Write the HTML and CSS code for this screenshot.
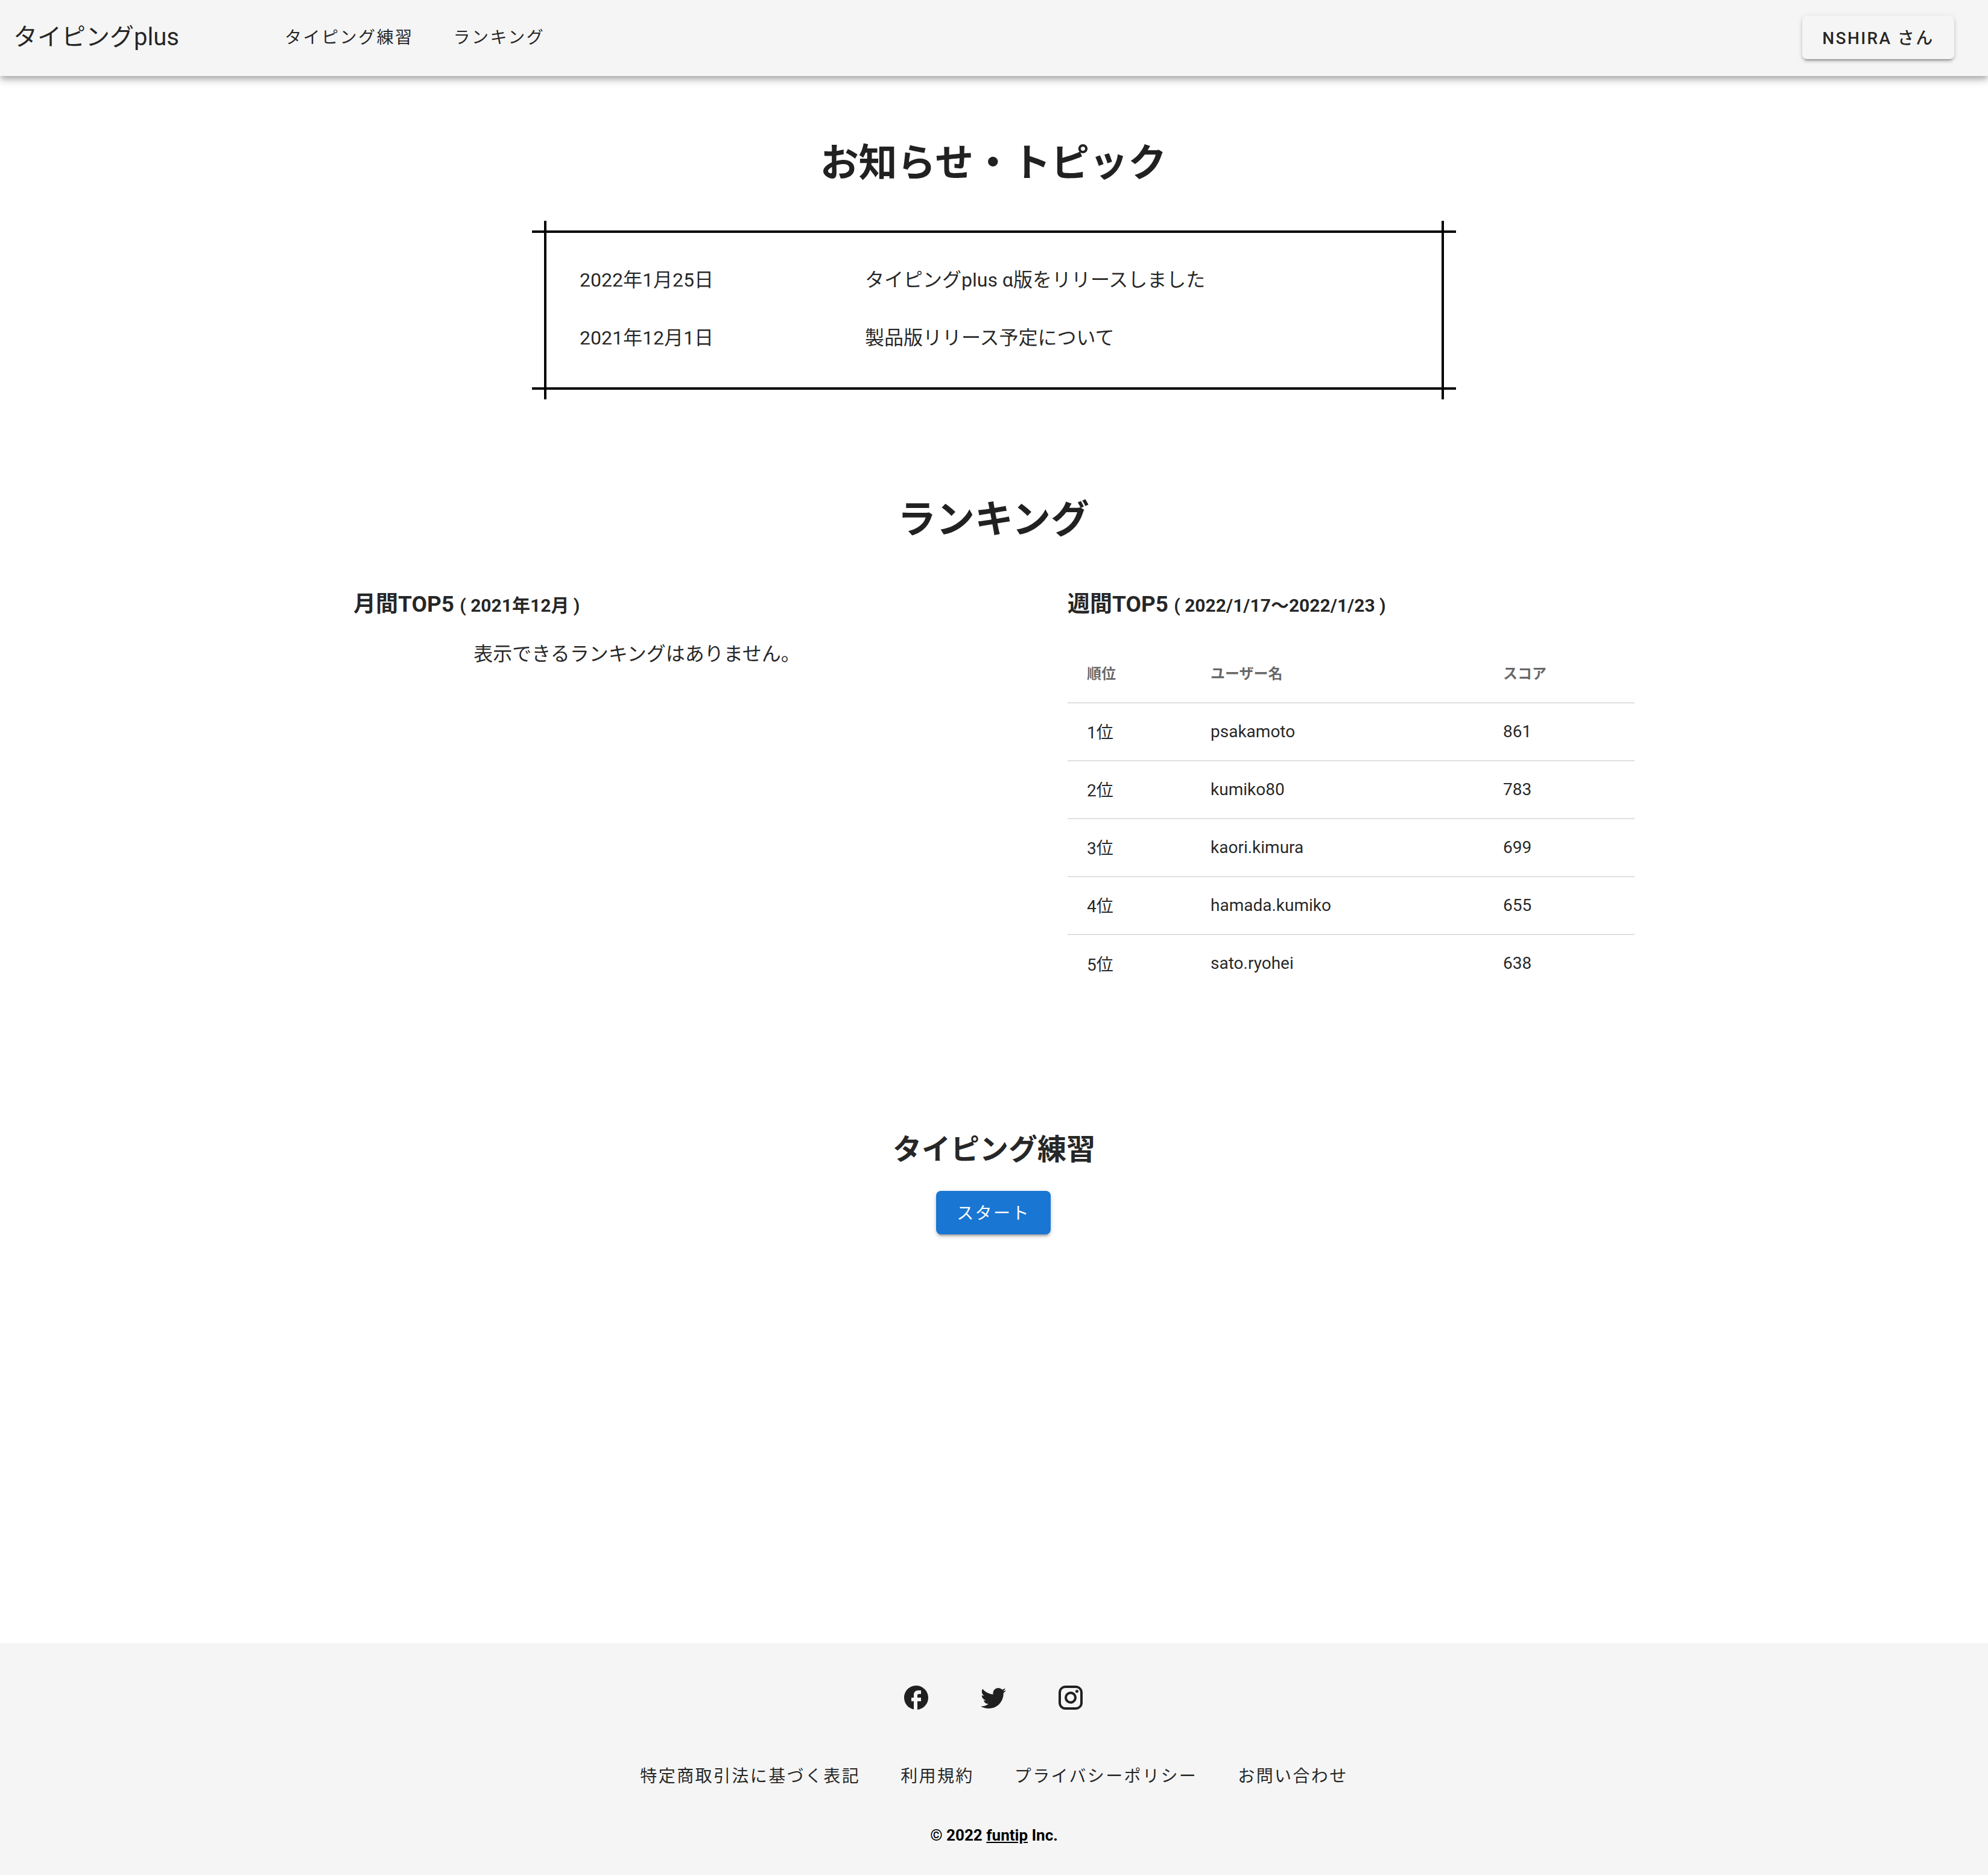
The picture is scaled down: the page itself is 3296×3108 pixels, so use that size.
FILE: index.html
```html
<!DOCTYPE html>
<html lang="ja">
<head>
    <meta charset="UTF-8">
    <meta name="viewport" content="width=device-width, initial-scale=1.0">
    <title>タイピングplus</title>
    <link rel="stylesheet" href="styles.css">
</head>
<body>

    <header class="app-bar">
        <a href="#" class="logo">タイピングplus</a>
        <nav class="main-nav">
            <a href="#">タイピング練習</a>
            <a href="#">ランキング</a>
        </nav>
        <button class="user-btn">NSHIRA さん</button>
    </header>

    <main class="content">
        <h2 class="section-title">お知らせ・トピック</h2>
        <div class="notice">
            <div class="notice-row">
                <span>2022年1月25日</span>
                <a href="#">タイピングplus α版をリリースしました</a>
            </div>
            <div class="notice-row">
                <span>2021年12月1日</span>
                <a href="#">製品版リリース予定について</a>
            </div>
        </div>

        <h2 class="section-title ranking-title">ランキング</h2>
        <div class="ranking-grid">
            <section>
                <h3 class="rank-heading">月間TOP5 <small>( 2021年12月 )</small></h3>
                <p class="empty-msg">表示できるランキングはありません。</p>
            </section>
            <section>
                <h3 class="rank-heading">週間TOP5 <small>( 2022/1/17〜2022/1/23 )</small></h3>
                <table class="rank-table">
                    <thead>
                        <tr>
                            <th class="col-rank">順位</th>
                            <th class="col-user">ユーザー名</th>
                            <th class="col-score">スコア</th>
                        </tr>
                    </thead>
                    <tbody>
                        <tr><td>1位</td><td>psakamoto</td><td>861</td></tr>
                        <tr><td>2位</td><td>kumiko80</td><td>783</td></tr>
                        <tr><td>3位</td><td>kaori.kimura</td><td>699</td></tr>
                        <tr><td>4位</td><td>hamada.kumiko</td><td>655</td></tr>
                        <tr><td>5位</td><td>sato.ryohei</td><td>638</td></tr>
                    </tbody>
                </table>
            </section>
        </div>

        <h2 class="practice-title">タイピング練習</h2>
        <div class="practice-action">
            <button class="start-btn">スタート</button>
        </div>
    </main>

    <footer class="site-footer">
        <div class="social">
            <a href="#" aria-label="Facebook">
                <svg viewBox="0 0 24 24"><path d="M22 12c0-5.52-4.48-10-10-10S2 6.48 2 12c0 4.84 3.44 8.87 8 9.8V15H8v-3h2V9.5C10 7.57 11.57 6 13.5 6H16v3h-2c-.55 0-1 .45-1 1v2h3v3h-3v6.95c5.05-.5 9-4.76 9-9.95z"/></svg>
            </a>
            <a href="#" aria-label="Twitter">
                <svg viewBox="0 0 24 24"><path d="M22.46 6c-.77.35-1.6.58-2.46.69.88-.53 1.56-1.37 1.88-2.38-.83.5-1.75.85-2.72 1.05C18.37 4.5 17.26 4 16 4c-2.35 0-4.27 1.92-4.27 4.29 0 .34.04.67.11.98C8.28 9.09 5.11 7.38 3 4.79c-.37.63-.58 1.37-.58 2.15 0 1.49.75 2.81 1.91 3.56-.71 0-1.37-.2-1.95-.5v.03c0 2.08 1.48 3.82 3.44 4.21a4.22 4.22 0 0 1-1.93.07 4.28 4.28 0 0 0 4 2.98 8.521 8.521 0 0 1-5.33 1.84c-.34 0-.68-.02-1.02-.06C3.44 20.29 5.7 21 8.12 21 16 21 20.33 14.46 20.33 8.79c0-.19 0-.37-.01-.56.84-.6 1.56-1.36 2.14-2.23z"/></svg>
            </a>
            <a href="#" aria-label="Instagram">
                <svg viewBox="0 0 24 24"><path d="M7.8 2h8.4C19.4 2 22 4.6 22 7.8v8.4a5.8 5.8 0 0 1-5.8 5.8H7.8C4.6 22 2 19.4 2 16.2V7.8A5.8 5.8 0 0 1 7.8 2m-.2 2A3.6 3.6 0 0 0 4 7.6v8.8C4 18.39 5.61 20 7.6 20h8.8a3.6 3.6 0 0 0 3.6-3.6V7.6C20 5.61 18.39 4 16.4 4H7.6m9.65 1.5a1.25 1.25 0 0 1 1.25 1.25A1.25 1.25 0 0 1 17.25 8 1.25 1.25 0 0 1 16 6.75a1.25 1.25 0 0 1 1.25-1.25M12 7a5 5 0 0 1 5 5 5 5 0 0 1-5 5 5 5 0 0 1-5-5 5 5 0 0 1 5-5m0 2a3 3 0 0 0-3 3 3 3 0 0 0 3 3 3 3 0 0 0 3-3 3 3 0 0 0-3-3z"/></svg>
            </a>
        </div>
        <nav class="footer-nav">
            <a href="#">特定商取引法に基づく表記</a>
            <a href="#">利用規約</a>
            <a href="#">プライバシーポリシー</a>
            <a href="#">お問い合わせ</a>
        </nav>
        <p class="copyright">© 2022 <a href="#">funtip</a> Inc.</p>
    </footer>

</body>
</html>
```

FILE: styles.css
```css
* {
    margin: 0;
    padding: 0;
    box-sizing: border-box;
}
body {
    font-family: Roboto, "Noto Sans CJK JP", sans-serif;
    color: rgba(0, 0, 0, 0.87);
    background-color: #fff;
    min-height: 100vh;
    display: flex;
    flex-direction: column;
}
a {
    color: inherit;
    text-decoration: none;
}
button {
    font-family: inherit;
    border: none;
    cursor: pointer;
}

/* header */
.app-bar {
    height: 126px;
    padding: 0 56px 2px 22px;
    background-color: #f5f5f5;
    display: flex;
    align-items: center;
    flex-shrink: 0;
    box-shadow: 0 4px 8px -2px rgba(0, 0, 0, 0.2), 0 8px 10px 0 rgba(0, 0, 0, 0.14), 0 2px 20px 0 rgba(0, 0, 0, 0.12);
}
.logo {
    font-size: 40px;
    line-height: 60px;
    width: 450px;
}
.main-nav {
    display: flex;
    gap: 66px;
    flex: 1;
    padding-top: 2px;
}
.main-nav a {
    font-size: 28px;
    line-height: 42px;
    letter-spacing: 2.5px;
}
.user-btn {
    height: 72px;
    width: 252px;
    padding-bottom: 2px;
    font-size: 28px;
    font-weight: 500;
    letter-spacing: 2.4px;
    color: rgba(0, 0, 0, 0.87);
    background-color: #f5f5f5;
    border-radius: 8px;
    box-shadow: 0 6px 2px -4px rgba(0, 0, 0, 0.2), 0 4px 4px 0 rgba(0, 0, 0, 0.14), 0 2px 10px 0 rgba(0, 0, 0, 0.12);
}

/* main */
.content {
    flex: 1;
}
.section-title {
    font-size: 64px;
    line-height: 96px;
    font-weight: 700;
    text-align: center;
    margin-top: 97px;
    padding-right: 2px;
}
.notice {
    position: relative;
    width: 1532px;
    height: 264px;
    margin: 63px auto 0;
    padding: 27px 0 0 79px;
    border-top: 4px solid #000;
    border-bottom: 4px solid #000;
}
.notice::before,
.notice::after {
    content: "";
    position: absolute;
    top: -20px;
    bottom: -20px;
    width: 4px;
    background-color: #000;
}
.notice::before {
    left: 20px;
}
.notice::after {
    right: 20px;
}
.notice-row {
    display: grid;
    grid-template-columns: 473px 1fr;
    align-items: center;
    height: 96px;
    font-size: 32px;
}
.section-title.ranking-title {
    margin-top: 168px;
}
.ranking-grid {
    display: grid;
    grid-template-columns: 940px 940px;
    column-gap: 244px;
    justify-content: center;
    margin-top: 62px;
}
.rank-heading {
    font-size: 37px;
    line-height: 60px;
    font-weight: 700;
}
.rank-heading small {
    font-size: 30px;
}
.empty-msg {
    font-size: 32px;
    line-height: 48px;
    text-align: center;
    margin-top: 26px;
}
.rank-table {
    width: 100%;
    margin-top: 35px;
    border-collapse: collapse;
    table-layout: fixed;
    font-size: 28px;
}
.rank-table th,
.rank-table td {
    height: 96px;
    padding: 0 32px 2px;
    text-align: left;
    border-bottom: 2px solid #e0e0e0;
}
.rank-table th {
    padding-bottom: 4px;
    font-size: 24px;
    font-weight: 700;
    color: rgba(0, 0, 0, 0.6);
}
.rank-table tbody tr:last-child td {
    border-bottom: none;
}
.col-rank {
    width: 205px;
}
.col-user {
    width: 485px;
}
.practice-title {
    font-size: 48px;
    line-height: 72px;
    font-weight: 700;
    text-align: center;
    margin-top: 225px;
}
.practice-action {
    display: flex;
    justify-content: center;
    margin-top: 32px;
    margin-bottom: 120px;
}
.start-btn {
    width: 190px;
    height: 72px;
    margin-right: 2px;
    padding-bottom: 2px;
    font-size: 28px;
    letter-spacing: 2.4px;
    color: #fff;
    background-color: #1976d2;
    border-radius: 8px;
    box-shadow: 0 6px 2px -4px rgba(0, 0, 0, 0.2), 0 4px 4px 0 rgba(0, 0, 0, 0.14), 0 2px 10px 0 rgba(0, 0, 0, 0.12);
}

/* footer */
.site-footer {
    background-color: #f5f5f5;
    height: 384px;
    padding-top: 66px;
    flex-shrink: 0;
}
.social {
    display: flex;
    justify-content: center;
    gap: 80px;
    padding-right: 2px;
}
.social a {
    display: block;
    width: 48px;
    height: 48px;
}
.social svg {
    display: block;
    width: 48px;
    height: 48px;
    fill: rgba(0, 0, 0, 0.87);
}
.footer-nav {
    display: flex;
    justify-content: center;
    gap: 67px;
    margin-top: 86px;
}
.footer-nav a {
    font-size: 28px;
    line-height: 42px;
    letter-spacing: 2.4px;
}
.copyright {
    font-size: 26px;
    line-height: 36px;
    font-weight: 700;
    color: #000;
    text-align: center;
    margin-top: 58px;
}
.copyright a {
    text-decoration: underline;
}
```
